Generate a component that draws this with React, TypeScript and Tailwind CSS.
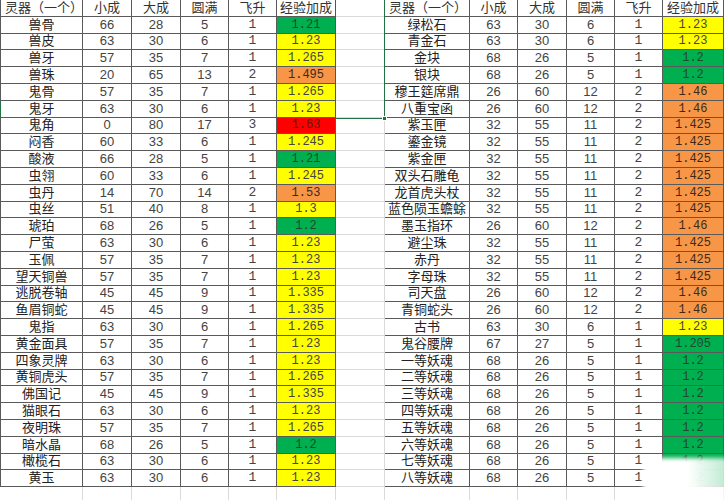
import React from "react"

type Row = [string, number, number, number, number, string]

const left: Row[] = [
  ["兽骨", 66, 28, 5, 1, "1.21"],
  ["兽皮", 63, 30, 6, 1, "1.23"],
  ["兽牙", 57, 35, 7, 1, "1.265"],
  ["兽珠", 20, 65, 13, 2, "1.495"],
  ["鬼骨", 57, 35, 7, 1, "1.265"],
  ["鬼牙", 63, 30, 6, 1, "1.23"],
  ["鬼角", 0, 80, 17, 3, "1.63"],
  ["闷香", 60, 33, 6, 1, "1.245"],
  ["酸液", 66, 28, 5, 1, "1.21"],
  ["虫翎", 60, 33, 6, 1, "1.245"],
  ["虫丹", 14, 70, 14, 2, "1.53"],
  ["虫丝", 51, 40, 8, 1, "1.3"],
  ["琥珀", 68, 26, 5, 1, "1.2"],
  ["尸萤", 63, 30, 6, 1, "1.23"],
  ["玉佩", 57, 35, 7, 1, "1.23"],
  ["望天铜兽", 57, 35, 7, 1, "1.23"],
  ["逃脱卷轴", 45, 45, 9, 1, "1.335"],
  ["鱼眉铜蛇", 45, 45, 9, 1, "1.335"],
  ["鬼指", 63, 30, 6, 1, "1.265"],
  ["黄金面具", 57, 35, 7, 1, "1.23"],
  ["四象灵牌", 63, 30, 6, 1, "1.23"],
  ["黄铜虎头", 57, 35, 7, 1, "1.265"],
  ["佛国记", 45, 45, 9, 1, "1.335"],
  ["猫眼石", 63, 30, 6, 1, "1.23"],
  ["夜明珠", 57, 35, 7, 1, "1.265"],
  ["暗水晶", 68, 26, 5, 1, "1.2"],
  ["橄榄石", 63, 30, 6, 1, "1.23"],
  ["黄玉", 63, 30, 6, 1, "1.23"],
]

const right: Row[] = [
  ["绿松石", 63, 30, 6, 1, "1.23"],
  ["青金石", 63, 30, 6, 1, "1.23"],
  ["金块", 68, 26, 5, 1, "1.2"],
  ["银块", 68, 26, 5, 1, "1.2"],
  ["穆王筵席鼎", 26, 60, 12, 2, "1.46"],
  ["八重宝函", 26, 60, 12, 2, "1.46"],
  ["紫玉匣", 32, 55, 11, 2, "1.425"],
  ["鎏金镜", 32, 55, 11, 2, "1.425"],
  ["紫金匣", 32, 55, 11, 2, "1.425"],
  ["双头石雕龟", 32, 55, 11, 2, "1.425"],
  ["龙首虎头杖", 32, 55, 11, 2, "1.425"],
  ["蓝色陨玉蟾蜍", 32, 55, 11, 2, "1.425"],
  ["墨玉指环", 26, 60, 12, 2, "1.46"],
  ["避尘珠", 32, 55, 11, 2, "1.425"],
  ["赤丹", 32, 55, 11, 2, "1.425"],
  ["字母珠", 32, 55, 11, 2, "1.425"],
  ["司天盘", 26, 60, 12, 2, "1.46"],
  ["青铜蛇头", 26, 60, 12, 2, "1.46"],
  ["古书", 63, 30, 6, 1, "1.23"],
  ["鬼谷腰牌", 67, 27, 5, 1, "1.205"],
  ["一等妖魂", 68, 26, 5, 1, "1.2"],
  ["二等妖魂", 68, 26, 5, 1, "1.2"],
  ["三等妖魂", 68, 26, 5, 1, "1.2"],
  ["四等妖魂", 68, 26, 5, 1, "1.2"],
  ["五等妖魂", 68, 26, 5, 1, "1.2"],
  ["六等妖魂", 68, 26, 5, 1, "1.2"],
  ["七等妖魂", 68, 26, 5, 1, "1.2"],
  ["八等妖魂", 68, 26, 5, 1, "1.2"],
]

const headers = ["灵器（一个）", "小成", "大成", "圆满", "飞升", "经验加成"]

const cjk = "font-['Liberation_Sans','Noto_Sans_CJK_SC',sans-serif]"
const sans = "font-['Liberation_Sans','Noto_Sans_CJK_SC',sans-serif]"
const mono = "font-['Liberation_Mono','Noto_Sans_CJK_SC',monospace]"

// conditional fill by bonus value, like the sheet's colour scale
function bonusColor(v: string) {
  const n = parseFloat(v)
  if (n >= 1.6) return "bg-[#ff0000] text-[#5a1a10]"
  if (n >= 1.4) return "bg-[#f79646] text-[#3d2a1a]"
  if (n > 1.21) return "bg-[#ffff00] text-[#444]"
  return "bg-[#00b050] text-[#1d4a2c]"
}

const cell = "flex items-center justify-center whitespace-nowrap leading-[14px] border-b border-r border-[#5a5a5a]"
const empty = "border-b border-r border-[#dadada]"

function HeaderCells({ first }: { first?: boolean }) {
  return (
    <>
      {headers.map((h, i) => (
        <div
          key={h}
          className={`${cell} ${cjk} text-[13px] text-[#333] ${i === 0 && first ? "border-l" : ""} ${i === 0 ? "justify-start pl-1" : ""}`}
        >
          {h}
        </div>
      ))}
    </>
  )
}

function DataCells({ row, first }: { row: Row; first?: boolean }) {
  const [name, a, b, c, d, v] = row
  return (
    <>
      <div className={`${cell} ${cjk} text-[13px] text-[#222] ${first ? "border-l" : ""}`}>{name}</div>
      <div className={`${cell} ${sans} text-[13px] text-[#444]`}>{a}</div>
      <div className={`${cell} ${sans} text-[13px] text-[#444]`}>{b}</div>
      <div className={`${cell} ${sans} text-[13px] text-[#444]`}>{c}</div>
      <div className={`${cell} ${mono} text-[13px] text-[#444]`}>{d}</div>
      <div className={`${cell} ${mono} text-[12px] ${bonusColor(v)}`}>{v}</div>
    </>
  )
}

export default function App() {
  return (
    <div className="relative w-[724px] h-[500px] overflow-hidden bg-white">
      <div className="grid grid-cols-[83px_49px_49px_48px_48px_59px_49px_85px_48px_49px_48px_48px_61px] auto-rows-[16.8px]">
        <HeaderCells first />
        <div className={empty} />
        <HeaderCells />
        {left.map((row, i) => (
          <React.Fragment key={i}>
            <DataCells row={row} first />
            <div className={empty} />
            <DataCells row={right[i]} />
          </React.Fragment>
        ))}
        {Array.from({ length: 13 }).map((_, i) => (
          <div key={i} className="border-r border-[#dadada] h-[13px]" />
        ))}
      </div>

      {/* active selection */}
      <div className="absolute left-[335px] top-0 w-[50px] h-[119px] border border-t-0 border-[#217346]" />
      <div className="absolute left-[382px] top-[116px] w-[5px] h-[5px] bg-[#217346] border border-white" />
      <div className="absolute left-0 top-[101px] w-px h-[17px] bg-[#217346]" />

      {/* watermark */}
      <div className="absolute left-[643px] top-[458px] w-[90px] h-[50px] rounded-tl-lg bg-gradient-to-r from-white via-white to-white/70 blur-[2px]" />
    </div>
  )
}
